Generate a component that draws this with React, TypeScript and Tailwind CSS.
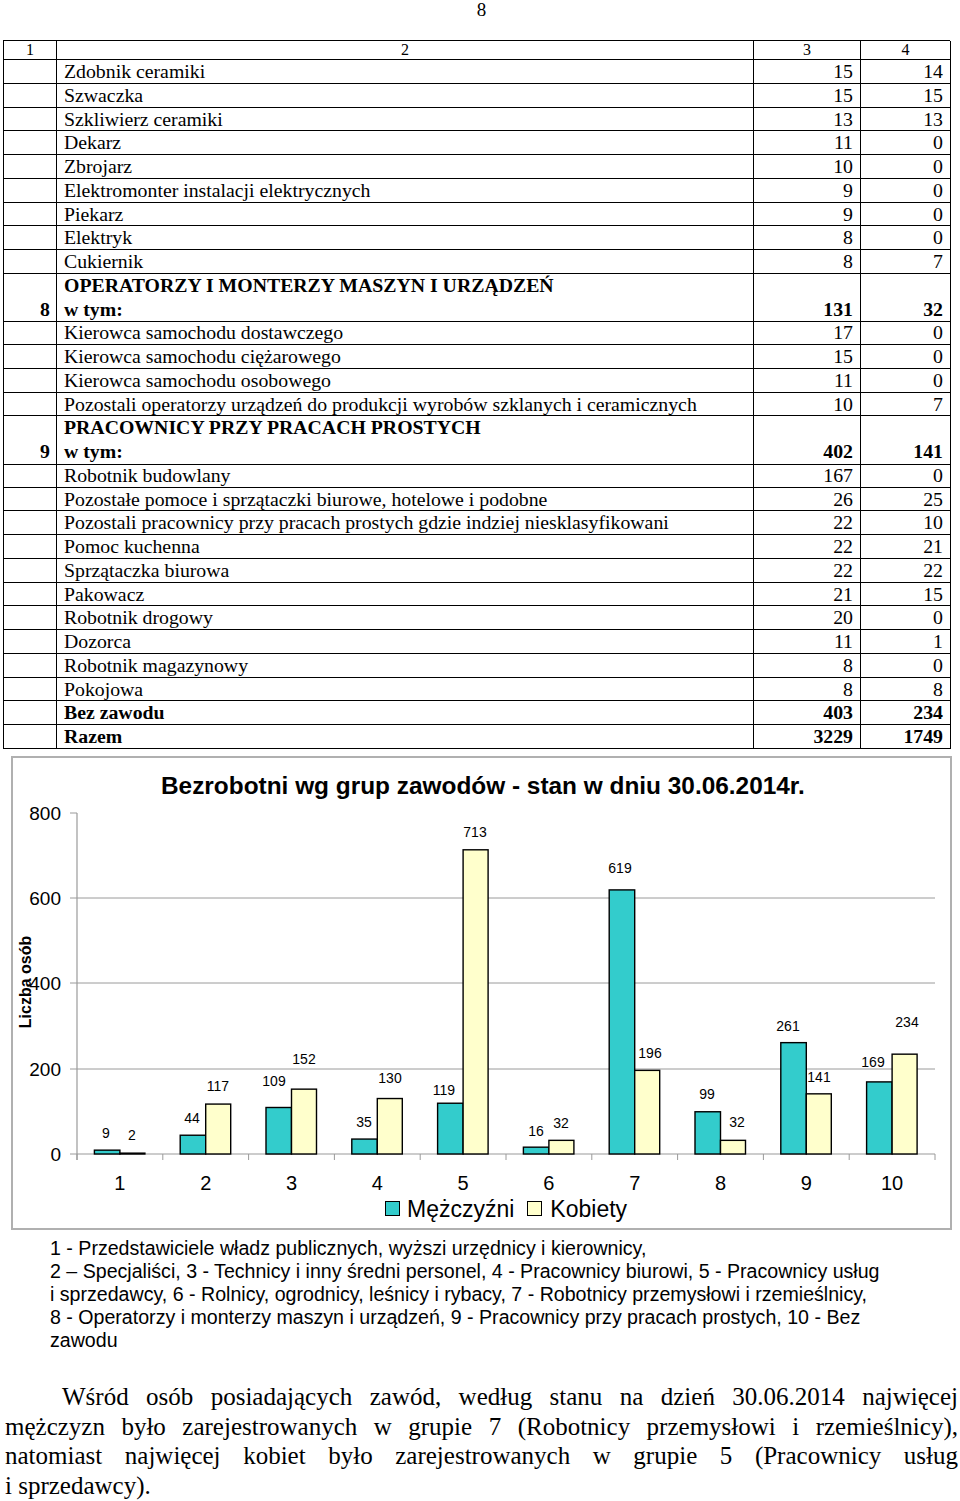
// App.tsx
// Unemployed by occupation: table continuation, bar chart and notes

type Row =
  | { kind: "row"; name: string; m: string; k: string; bold?: boolean }
  | { kind: "group"; no: string; name: string; m: string; k: string };

const rows: Row[] = [
  { kind: "row", name: "Zdobnik ceramiki", m: "15", k: "14" },
  { kind: "row", name: "Szwaczka", m: "15", k: "15" },
  { kind: "row", name: "Szkliwierz ceramiki", m: "13", k: "13" },
  { kind: "row", name: "Dekarz", m: "11", k: "0" },
  { kind: "row", name: "Zbrojarz", m: "10", k: "0" },
  { kind: "row", name: "Elektromonter instalacji elektrycznych", m: "9", k: "0" },
  { kind: "row", name: "Piekarz", m: "9", k: "0" },
  { kind: "row", name: "Elektryk", m: "8", k: "0" },
  { kind: "row", name: "Cukiernik", m: "8", k: "7" },
  { kind: "group", no: "8", name: "OPERATORZY I MONTERZY MASZYN I URZĄDZEŃ", m: "131", k: "32" },
  { kind: "row", name: "Kierowca samochodu dostawczego", m: "17", k: "0" },
  { kind: "row", name: "Kierowca samochodu ciężarowego", m: "15", k: "0" },
  { kind: "row", name: "Kierowca samochodu osobowego", m: "11", k: "0" },
  { kind: "row", name: "Pozostali operatorzy urządzeń do produkcji wyrobów szklanych i ceramicznych", m: "10", k: "7" },
  { kind: "group", no: "9", name: "PRACOWNICY PRZY PRACACH PROSTYCH", m: "402", k: "141" },
  { kind: "row", name: "Robotnik budowlany", m: "167", k: "0" },
  { kind: "row", name: "Pozostałe pomoce i sprzątaczki biurowe, hotelowe i podobne", m: "26", k: "25" },
  { kind: "row", name: "Pozostali pracownicy przy pracach prostych gdzie indziej niesklasyfikowani", m: "22", k: "10" },
  { kind: "row", name: "Pomoc kuchenna", m: "22", k: "21" },
  { kind: "row", name: "Sprzątaczka biurowa", m: "22", k: "22" },
  { kind: "row", name: "Pakowacz", m: "21", k: "15" },
  { kind: "row", name: "Robotnik drogowy", m: "20", k: "0" },
  { kind: "row", name: "Dozorca", m: "11", k: "1" },
  { kind: "row", name: "Robotnik magazynowy", m: "8", k: "0" },
  { kind: "row", name: "Pokojowa", m: "8", k: "8" },
  { kind: "row", name: "Bez zawodu", m: "403", k: "234", bold: true },
  { kind: "row", name: "Razem", m: "3229", k: "1749", bold: true },
];

// [mężczyźni, kobiety] per group, label centres in page coords
const bars: { m: number; k: number; lm: [number, number]; lk: [number, number] }[] = [
  { m: 9, k: 2, lm: [106, 1132], lk: [132, 1134] },
  { m: 44, k: 117, lm: [192, 1117], lk: [218, 1085] },
  { m: 109, k: 152, lm: [274, 1080], lk: [304, 1058] },
  { m: 35, k: 130, lm: [364, 1121], lk: [390, 1077] },
  { m: 119, k: 713, lm: [444, 1089], lk: [475, 831] },
  { m: 16, k: 32, lm: [536, 1130], lk: [561, 1122] },
  { m: 619, k: 196, lm: [620, 867], lk: [650, 1052] },
  { m: 99, k: 32, lm: [707, 1093], lk: [737, 1121] },
  { m: 261, k: 141, lm: [788, 1025], lk: [819, 1076] },
  { m: 169, k: 234, lm: [873, 1061], lk: [907, 1021] },
];

const grid = "grid grid-cols-[53px_697px_107px_90px]";
const cell = "border-r border-b border-black";

function TableRow({ row }: { row: Row }) {
  if (row.kind === "group") {
    return (
      <div className={`${grid} h-[47.5px] font-bold`}>
        <div className={`${cell} flex items-end justify-end pr-[6px] leading-[23.75px]`}>{row.no}</div>
        <div className={`${cell} flex flex-col justify-end pl-[7px] leading-[23.75px]`}>
          <span>{row.name}</span>
          <span>w tym:</span>
        </div>
        <div className={`${cell} flex items-end justify-end pr-[7px] leading-[23.75px]`}>{row.m}</div>
        <div className={`${cell} flex items-end justify-end pr-[7px] leading-[23.75px]`}>{row.k}</div>
      </div>
    );
  }
  return (
    <div className={`${grid} h-[23.75px] leading-[22.75px] ${row.bold ? "font-bold" : ""}`}>
      <div className={cell}></div>
      <div className={`${cell} pl-[7px] whitespace-nowrap`}>{row.name}</div>
      <div className={`${cell} text-right pr-[7px]`}>{row.m}</div>
      <div className={`${cell} text-right pr-[7px]`}>{row.k}</div>
    </div>
  );
}

function Chart() {
  const X = (v: number) => v - 13;
  const Y = (v: number) => v - 800;
  const base = 1153;
  const scale = 85.33 / 200;
  const left = 77;
  const step = 85.8;

  return (
    <svg width="937" height="394" viewBox="0 0 937 394" className="block" fontFamily="'Liberation Sans', Arial, sans-serif">
      {[897, 982, 1068].map((y) => (
        <line key={y} x1={X(left)} x2={X(935)} y1={Y(y)} y2={Y(y)} stroke="#9a9a9a" strokeWidth="1" />
      ))}
      {[812, 897, 982, 1068, 1153].map((y) => (
        <line key={"t" + y} x1={X(70)} x2={X(left)} y1={Y(y)} y2={Y(y)} stroke="#9a9a9a" strokeWidth="1" />
      ))}
      <line x1={X(left)} x2={X(left)} y1={Y(812)} y2={Y(1159)} stroke="#9a9a9a" strokeWidth="1.2" />
      <line x1={X(left)} x2={X(935)} y1={Y(base)} y2={Y(base)} stroke="#9a9a9a" strokeWidth="1.2" />
      {Array.from({ length: 11 }).map((_, i) => (
        <line key={"x" + i} x1={X(left + step * i)} x2={X(left + step * i)} y1={Y(base)} y2={Y(1159)} stroke="#9a9a9a" strokeWidth="1" />
      ))}

      {[
        ["800", 812],
        ["600", 897],
        ["400", 982],
        ["200", 1068],
        ["0", 1153],
      ].map(([t, y]) => (
        <text key={t} x={X(61)} y={Y(y as number)} fontSize="19" textAnchor="end" dominantBaseline="central" fill="#000">
          {t}
        </text>
      ))}

      <text
        x={X(25)}
        y={Y(981)}
        fontSize="16"
        fontWeight="bold"
        textAnchor="middle"
        dominantBaseline="central"
        transform={`rotate(-90 ${X(25)} ${Y(981)})`}
      >
        Liczba osób
      </text>

      {bars.map((b, i) => {
        const c = left + step * (i + 0.5);
        const hm = b.m * scale;
        const hk = b.k * scale;
        return (
          <g key={i}>
            <rect x={X(c - 25.5)} y={Y(base - hm)} width="25.5" height={hm} fill="#33cccc" stroke="#000" strokeWidth="1.4" />
            <rect x={X(c)} y={Y(base - hk)} width="25" height={hk} fill="#ffffcc" stroke="#000" strokeWidth="1.4" />
            <text x={X(b.lm[0])} y={Y(b.lm[1])} fontSize="14" textAnchor="middle" dominantBaseline="central">
              {b.m}
            </text>
            <text x={X(b.lk[0])} y={Y(b.lk[1])} fontSize="14" textAnchor="middle" dominantBaseline="central">
              {b.k}
            </text>
            <text x={X(c)} y={Y(1182)} fontSize="20" textAnchor="middle" dominantBaseline="central">
              {i + 1}
            </text>
          </g>
        );
      })}
    </svg>
  );
}

export default function App() {
  return (
    <div className="w-[960px] bg-white text-black font-['Liberation_Serif',_'Times_New_Roman',_serif]">
      <div className="h-[40px] text-center text-[19px] leading-[20px] pl-[3px]">8</div>

      <div className="ml-[3px] w-[947px] border-l border-t border-black text-[19.8px]">
        <div className={`${grid} h-[19px] text-[16px] leading-[18px]`}>
          <div className={`${cell} text-center`}>1</div>
          <div className={`${cell} text-center`}>2</div>
          <div className={`${cell} text-center`}>3</div>
          <div className={`${cell} text-center`}>4</div>
        </div>
        {rows.map((r, i) => (
          <TableRow key={i} row={r} />
        ))}
      </div>

      <div className="mt-[7px] ml-[11px] w-[941px] h-[474px] border-2 border-[#b0b0b0] flex flex-col font-['Liberation_Sans',_Arial,_sans-serif]">
        <div className="h-[43px] pt-[14px] pl-[148px] text-[24.4px] leading-[28px] font-bold whitespace-nowrap">
          Bezrobotni wg grup zawodów - stan w dniu 30.06.2014r.
        </div>
        <Chart />
        <div className="h-[28px] flex items-center pl-[372px] text-[23px] leading-[26px]">
          <span className="w-[15px] h-[15px] bg-[#33cccc] border border-black mr-[7px]"></span>
          <span>Mężczyźni</span>
          <span className="w-[15px] h-[15px] bg-[#ffffcc] border border-black ml-[13px] mr-[8px]"></span>
          <span>Kobiety</span>
        </div>
      </div>

      <div className="mt-[7.5px] pl-[50px] text-[19.6px] leading-[23px] font-['Liberation_Sans',_Arial,_sans-serif] whitespace-nowrap">
        <div>1 - Przedstawiciele władz publicznych, wyższi urzędnicy i kierownicy,</div>
        <div>2 – Specjaliści, 3 - Technicy i inny średni personel, 4 - Pracownicy biurowi, 5 - Pracownicy usług</div>
        <div>i sprzedawcy, 6 - Rolnicy, ogrodnicy, leśnicy i rybacy, 7 - Robotnicy przemysłowi i rzemieślnicy,</div>
        <div>8 - Operatorzy i monterzy maszyn i urządzeń, 9 - Pracownicy przy pracach prostych, 10 - Bez</div>
        <div>zawodu</div>
      </div>

      <div className="mt-[30px] ml-[5px] w-[953px] text-[25px] leading-[29.5px] whitespace-nowrap">
        <div className="pl-[57px] text-justify [text-align-last:justify]">
          Wśród osób posiadających zawód, według stanu na dzień 30.06.2014 najwięcej
        </div>
        <div className="text-justify [text-align-last:justify]">
          mężczyzn było zarejestrowanych w grupie 7 (Robotnicy przemysłowi i rzemieślnicy),
        </div>
        <div className="text-justify [text-align-last:justify]">
          natomiast najwięcej kobiet było zarejestrowanych w grupie 5 (Pracownicy usług
        </div>
        <div>i sprzedawcy).</div>
      </div>
    </div>
  );
}
